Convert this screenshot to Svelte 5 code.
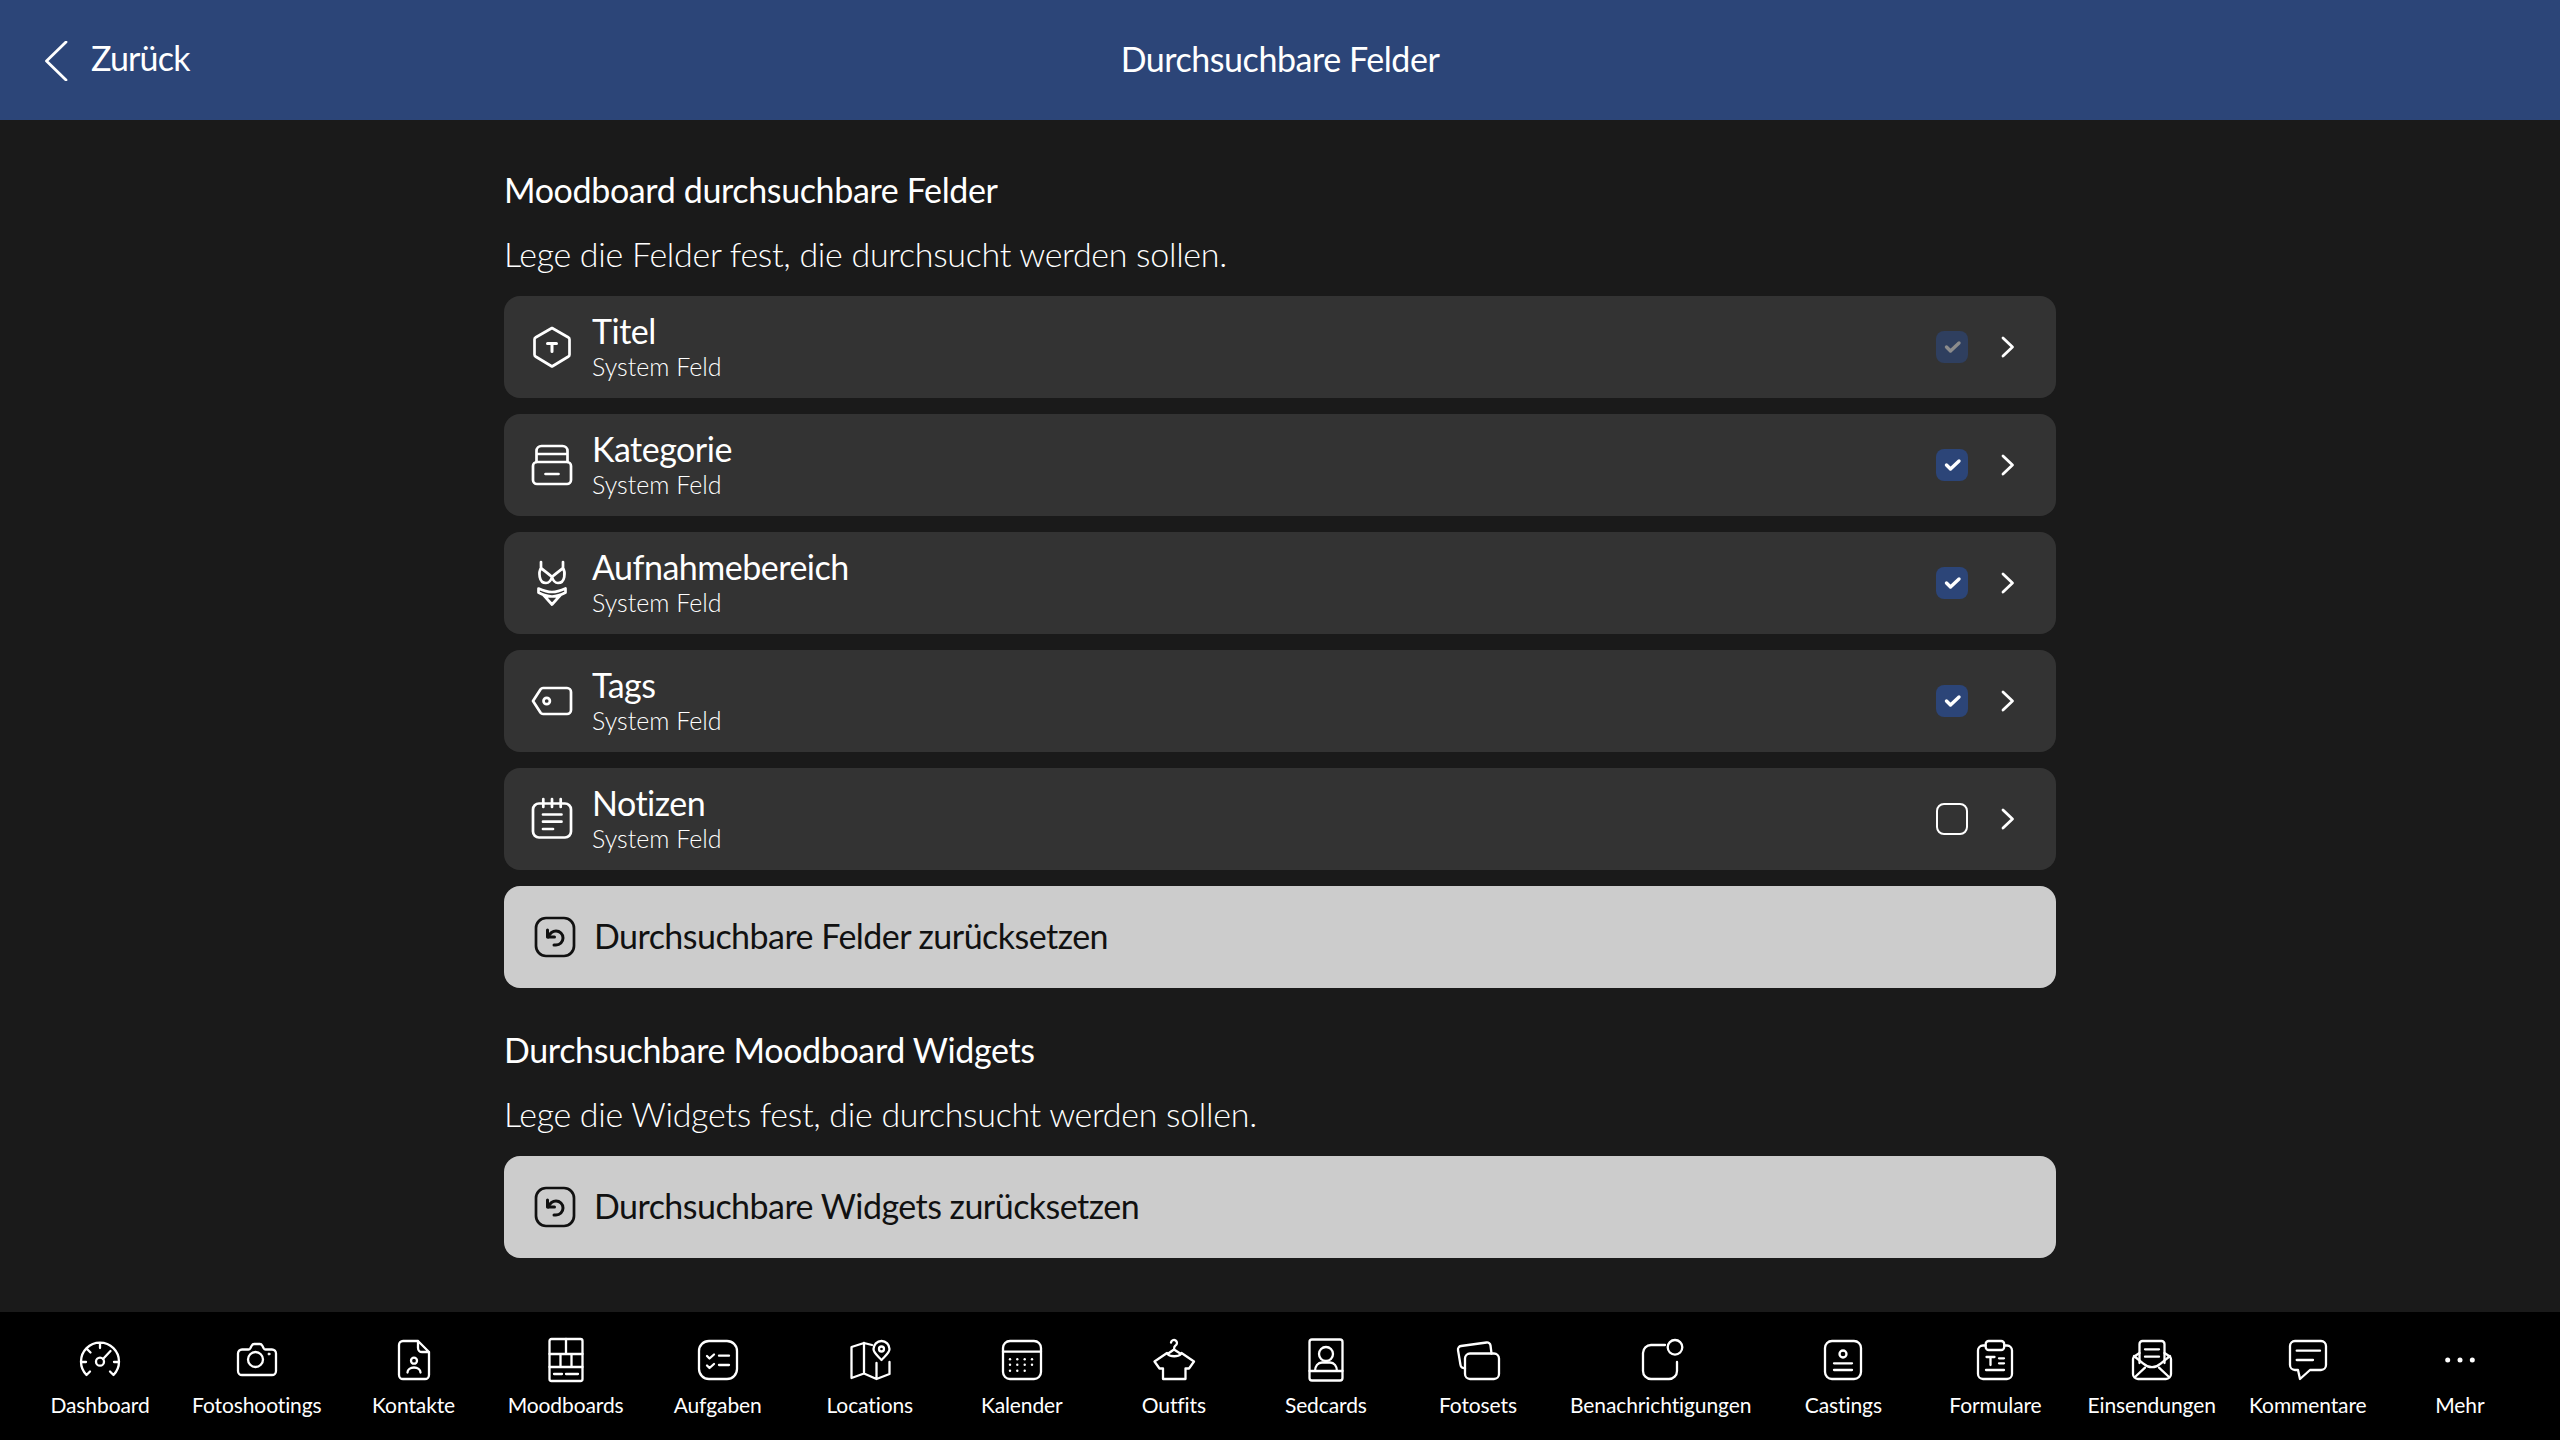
<script>
  const icons = {
    title: '<path d="M24 5 L40.5 14.5 Q41.5 15 41.5 16.5 V31.5 Q41.5 33 40.5 33.5 L24 43.5 L7.5 33.5 Q6.5 33 6.5 31.5 V16.5 Q6.5 15 7.5 14.5 Z"/><path d="M19.5 20.5 H28.5 M24 20.5 V28.5" stroke-width="3"/>',
    category: '<rect x="5" y="21" width="38" height="22" rx="4"/><path d="M8.5 21 V10 a5 5 0 0 1 5-5 H34.5 a5 5 0 0 1 5 5 V21 M8.5 13 H39.5 M17.5 33 H30.5"/>',
    bikini: '<path d="M13 3 V9 C15 11 21 15 24 18 C27 15 33 11 35 9 V3 M13 9 C10.5 13 10.5 24 18 24 C21 24 23 21.5 24 18 C25 21.5 27 24 30 24 C37.5 24 37.5 13 35 9"/><path d="M10.5 29.5 C15 31.5 20 33 24 33 C28 33 33 31.5 37.5 29.5 V33.5 C33 36 28 37.5 24 37.5 C20 37.5 15 36 10.5 33.5 Z M15.5 36 L24 45.5 L32.5 36"/>',
    tag: '<path d="M15 11 H39 a4 4 0 0 1 4 4 V33 a4 4 0 0 1-4 4 H15 a3 3 0 0 1-2.4-1.2 L5 24 L12.6 12.2 A3 3 0 0 1 15 11 Z"/><circle cx="18.7" cy="24" r="3.2"/>',
    notes: '<rect x="5" y="8.5" width="38" height="34" rx="6"/><path d="M15.3 4 V12 M24 4 V12 M32.7 4 V12 M15 19.5 H33.5 M15 26.7 H33.5 M15 34 H25"/>',
    reset: '<rect x="5" y="5" width="38" height="38" rx="10"/><path d="M16.5 17 V24 H23.5" stroke-width="3"/><path d="M17 24 C19 20 22 18 25 18 A7 7 0 0 1 25 32 H23" stroke-width="3"/>',
    dashboard: '<path d="M14 35.5 L10.5 39 A19 19 0 1 1 37.5 39 L34 35.5 M24 7 V12 M11 13 L14.5 16.5 M5 26 H10 M38 26 H43 M27 23 L34.5 15"/><circle cx="24" cy="25.7" r="4"/>',
    camera: '<path d="M9 13.5 H15.5 a2 2 0 0 0 1.7-1 L18.8 9.5 A3 3 0 0 1 21.2 8 H26.8 A3 3 0 0 1 29.2 9.5 L30.8 12.5 a2 2 0 0 0 1.7 1 H39 a4 4 0 0 1 4 4 V35 a4 4 0 0 1-4 4 H9 a4 4 0 0 1-4-4 V17.5 a4 4 0 0 1 4-4 Z"/><circle cx="22.5" cy="23.5" r="7.5"/><circle cx="36" cy="18" r="1" fill="currentColor" stroke-width="1"/>',
    contact: '<path d="M13 5 H28 L39 16 V39 a4 4 0 0 1-4 4 H13 a4 4 0 0 1-4-4 V9 a4 4 0 0 1 4-4 Z M28 5 V12 a4 4 0 0 0 4 4 H39"/><circle cx="24" cy="24.7" r="3"/><path d="M17.5 36.5 c0-3 3-5 6.5-5 s6.5 2 6.5 5"/>',
    moodboard: '<rect x="7.5" y="3" width="33" height="42" rx="2"/><path d="M24 3 V18 M7.5 18 H40.5 M18.5 18 V31 M29.5 18 V31 M7.5 31 H40.5 M12 38 H20 M24 38 H36"/>',
    tasks: '<rect x="5" y="5" width="38" height="38" rx="10"/><path d="M13 20 L15.5 22.5 L20 18.5 M13 29.5 L15.5 32 L20 28 M25 19.7 H35 M25 29 H35"/>',
    location: '<path d="M26 9 L18 7 L5.5 11 V42 L18 37.5 L30.5 43 L43.5 38 V26 M18 7 V37.5 M30.5 27 V43"/><path d="M35.5 24 c-3-3.5-8-7-8-11 a8 8 0 0 1 16 0 c0 4-5 7.5-8 11 Z"/><circle cx="35.5" cy="13" r="2.5"/>',
    calendar: '<rect x="5" y="5" width="38" height="38" rx="7"/><path d="M5 15.7 H43"/>' +
      [[12, 23.3], [19.3, 23.3], [26.7, 23.3], [34, 23.3], [12, 28.7], [19.3, 28.7], [26.7, 28.7], [34, 28.7], [12, 34.7], [19.3, 34.7], [26.7, 34.7]]
        .map(([x, y]) => `<circle cx="${x}" cy="${y}" r="1.2" fill="currentColor" stroke="none"/>`).join(''),
    outfit: '<path d="M17 17 L4.5 25.5 L9.5 32.5 H13 V43 H35.5 V32.5 H39 L44 25.5 L31.5 17"/><path d="M21 6.5 a3 3 0 1 1 4.5 3 c-1.2 .7-1.5 1.5-1.5 4 L17.5 18 C20.5 21 28 21 31 18 L24 13.5"/>',
    sedcard: '<rect x="7.5" y="3.5" width="33" height="41" rx="2.5"/><circle cx="24" cy="18" r="7"/><path d="M7.5 35 H40.5 M13 35 c0-5 3-8.5 7-8.5 h8 c4 0 7 3.5 7 8.5"/>',
    photoset: '<rect x="11" y="17.5" width="34" height="25.5" rx="5"/><path d="M37.5 17.5 L36.5 9.5 a3.5 3.5 0 0 0-4-3 L7 10 a3.5 3.5 0 0 0-3 4 L6.5 29 a3.5 3.5 0 0 0 4.5 3"/>',
    notify: '<path d="M28 9 H14 a8 8 0 0 0-8 8 V35 a8 8 0 0 0 8 8 H32 a8 8 0 0 0 8-8 V26"/><circle cx="38" cy="11.3" r="7.3"/>',
    casting: '<rect x="6" y="5" width="36" height="38" rx="7"/><circle cx="24" cy="18" r="3.5"/><path d="M15 27.3 H33 M15 34 H33"/>',
    form: '<path d="M14.5 9.5 H12 a5 5 0 0 0-5 5 V38 a5 5 0 0 0 5 5 H36 a5 5 0 0 0 5-5 V14.5 a5 5 0 0 0-5-5 H33.5"/><rect x="14.7" y="5" width="18.5" height="9" rx="3"/><path d="M15.5 21 H23.5 M19.5 21 V29 M28 22.3 H33 M28 27.3 H33 M15 34 H33"/>',
    submission: '<path d="M11.5 27 V8 a3 3 0 0 1 3-3 H33.5 a3 3 0 0 1 3 3 V27 M17 13.3 H31 M17 20.7 H31"/><path d="M11.5 17 L7 20 a3.5 3.5 0 0 0-2 3 V38 a5 5 0 0 0 5 5 H38 a5 5 0 0 0 5-5 V23 a3.5 3.5 0 0 0-2-3 L36.5 17 M6 20 L15 27.3 Q24 35 33 27.3 L42 20 M7 41 L17 31.7 M41 41 L31 31.7"/>',
    comment: '<path d="M11 5 H37 a5 5 0 0 1 5 5 V29 a5 5 0 0 1-5 5 H26 L16 43 L14 34 H11 a5 5 0 0 1-5-5 V10 a5 5 0 0 1 5-5 Z M12.7 14.7 H36 M12.7 24 H29"/>',
    more: '<circle cx="11.7" cy="24" r="2.5" fill="currentColor" stroke="none"/><circle cx="24" cy="24" r="2.5" fill="currentColor" stroke="none"/><circle cx="36.3" cy="24" r="2.5" fill="currentColor" stroke="none"/>'
  };

  const fields = [
    { name: 'Titel', icon: 'title', state: 'locked' },
    { name: 'Kategorie', icon: 'category', state: 'on' },
    { name: 'Aufnahmebereich', icon: 'bikini', state: 'on' },
    { name: 'Tags', icon: 'tag', state: 'on' },
    { name: 'Notizen', icon: 'notes', state: 'off' }
  ];

  const tabs = [
    ['Dashboard', 'dashboard'], ['Fotoshootings', 'camera'], ['Kontakte', 'contact'], ['Moodboards', 'moodboard'],
    ['Aufgaben', 'tasks'], ['Locations', 'location'], ['Kalender', 'calendar'], ['Outfits', 'outfit'],
    ['Sedcards', 'sedcard'], ['Fotosets', 'photoset'], ['Benachrichtigungen', 'notify'], ['Castings', 'casting'],
    ['Formulare', 'form'], ['Einsendungen', 'submission'], ['Kommentare', 'comment'], ['Mehr', 'more']
  ];
</script>

<div class="page">
  <header class="topbar">
    <button class="back">
      <svg class="back-icon" viewBox="0 0 24 40"><path d="M22 1 L2.5 20 L22 39" /></svg>
      <span>Zurück</span>
    </button>
    <div class="page-title">Durchsuchbare Felder</div>
  </header>

  <main class="content">
    <section class="section first">
      <h2>Moodboard durchsuchbare Felder</h2>
      <p>Lege die Felder fest, die durchsucht werden sollen.</p>
      <div class="list">
        {#each fields as field}
          <div class="row">
            <svg class="icon row-icon" viewBox="0 0 48 48">{@html icons[field.icon]}</svg>
            <div class="row-text">
              <div class="row-name">{field.name}</div>
              <div class="row-sub">System Feld</div>
            </div>
            <span class="check {field.state}">
              {#if field.state !== 'off'}
                <svg viewBox="0 0 32 32"><path d="M10.5 16 L14.5 20 L23 12" /></svg>
              {/if}
            </span>
            <svg class="chevron" viewBox="0 0 48 48"><path d="M19 15 L28.5 24 L19 33" /></svg>
          </div>
        {/each}
        <button class="reset">
          <svg class="icon row-icon" viewBox="0 0 48 48">{@html icons.reset}</svg>
          <span>Durchsuchbare Felder zurücksetzen</span>
        </button>
      </div>
    </section>

    <section class="section">
      <h2>Durchsuchbare Moodboard Widgets</h2>
      <p>Lege die Widgets fest, die durchsucht werden sollen.</p>
      <button class="reset">
        <svg class="icon row-icon" viewBox="0 0 48 48">{@html icons.reset}</svg>
        <span>Durchsuchbare Widgets zurücksetzen</span>
      </button>
    </section>
  </main>

  <nav class="tabbar">
    {#each tabs as [label, icon]}
      <div class="tab">
        <svg class="icon tab-icon" viewBox="0 0 48 48">{@html icons[icon]}</svg>
        <span>{label}</span>
      </div>
    {/each}
  </nav>
</div>

<style>
  :global(body) {
    margin: 0;
    background: #1a1a1a;
  }

  .page {
    display: flex;
    flex-direction: column;
    width: 2560px;
    height: 1440px;
    overflow: hidden;
    background: #1a1a1a;
    color: #fff;
    font-family: Lato, "Open Sans", sans-serif;
  }

  .topbar {
    position: relative;
    display: flex;
    align-items: center;
    justify-content: center;
    flex: 0 0 120px;
    background: #2c4578;
  }

  .back {
    position: absolute;
    left: 44px;
    top: 38px;
    display: flex;
    align-items: center;
    gap: 23px;
    padding: 0;
    border: 0;
    background: none;
    color: #fff;
    font: inherit;
    font-size: 34px;
    line-height: 40px;
    letter-spacing: -0.8px;
  }

  .back span {
    margin-bottom: 5px;
  }

  .back-icon {
    width: 24px;
    height: 40px;
    fill: none;
    stroke: #fff;
    stroke-width: 2.8;
    stroke-linecap: round;
    stroke-linejoin: round;
  }

  .page-title {
    padding-bottom: 4px;
    font-size: 34px;
    letter-spacing: -0.45px;
  }

  .content {
    flex: 1;
    width: 1552px;
    margin: 0 auto;
  }

  .section {
    margin-top: 44px;
  }

  .section.first {
    margin-top: 52px;
  }

  h2 {
    margin: 0 0 28px;
    font-size: 34px;
    line-height: 36px;
    font-weight: 400;
    letter-spacing: -0.36px;
  }

  p {
    margin: 0 0 24px;
    font-size: 34px;
    line-height: 36px;
    font-weight: 300;
    letter-spacing: -0.3px;
  }

  .list {
    display: flex;
    flex-direction: column;
    gap: 16px;
  }

  .row {
    display: flex;
    align-items: center;
    height: 102px;
    padding: 0 24px;
    border-radius: 16px;
    background: #333;
  }

  .row-text {
    flex: 1;
    margin-left: 16px;
  }

  .row-name {
    font-size: 34px;
    line-height: 36px;
    letter-spacing: -0.5px;
  }

  .row-sub {
    margin-top: 2px;
    font-size: 25px;
    line-height: 30px;
    font-weight: 300;
  }

  .icon {
    fill: none;
    stroke: currentColor;
    stroke-width: 2.3;
    stroke-linecap: round;
    stroke-linejoin: round;
  }

  .row-icon {
    flex: none;
    width: 48px;
    height: 48px;
    stroke-width: 2.7;
  }

  .check {
    display: flex;
    flex: none;
    width: 32px;
    height: 32px;
    margin-right: 16px;
    border-radius: 8px;
    box-sizing: border-box;
    background: #2c4578;
  }

  .check svg {
    fill: none;
    stroke: #fff;
    stroke-width: 3.4;
    stroke-linecap: round;
    stroke-linejoin: round;
  }

  .check.locked {
    background: #2f3f5f;
  }

  .check.locked svg {
    stroke: #8c8c8c;
  }

  .check.off {
    background: none;
    border: 2.5px solid #fff;
  }

  .chevron {
    flex: none;
    width: 48px;
    height: 48px;
    fill: none;
    stroke: #fff;
    stroke-width: 2.8;
    stroke-linecap: round;
    stroke-linejoin: round;
  }

  .reset {
    display: flex;
    align-items: center;
    gap: 15px;
    width: 100%;
    height: 102px;
    padding: 0 27px;
    border: 0;
    border-radius: 16px;
    background: #ccc;
    color: #111;
    font: inherit;
    font-size: 34px;
    letter-spacing: -0.53px;
    text-align: left;
  }

  .reset span {
    margin-bottom: 4px;
  }

  .tabbar {
    display: flex;
    justify-content: space-between;
    flex: 0 0 128px;
    box-sizing: border-box;
    padding: 24px 24px 0;
    background: #000;
  }

  .tab {
    display: flex;
    flex-direction: column;
    align-items: center;
    box-sizing: border-box;
    min-width: 152px;
    padding: 0 16px;
    font-size: 21px;
    letter-spacing: -0.1px;
    white-space: nowrap;
  }

  .tab-icon {
    width: 48px;
    height: 48px;
    margin-bottom: 8px;
  }
</style>
